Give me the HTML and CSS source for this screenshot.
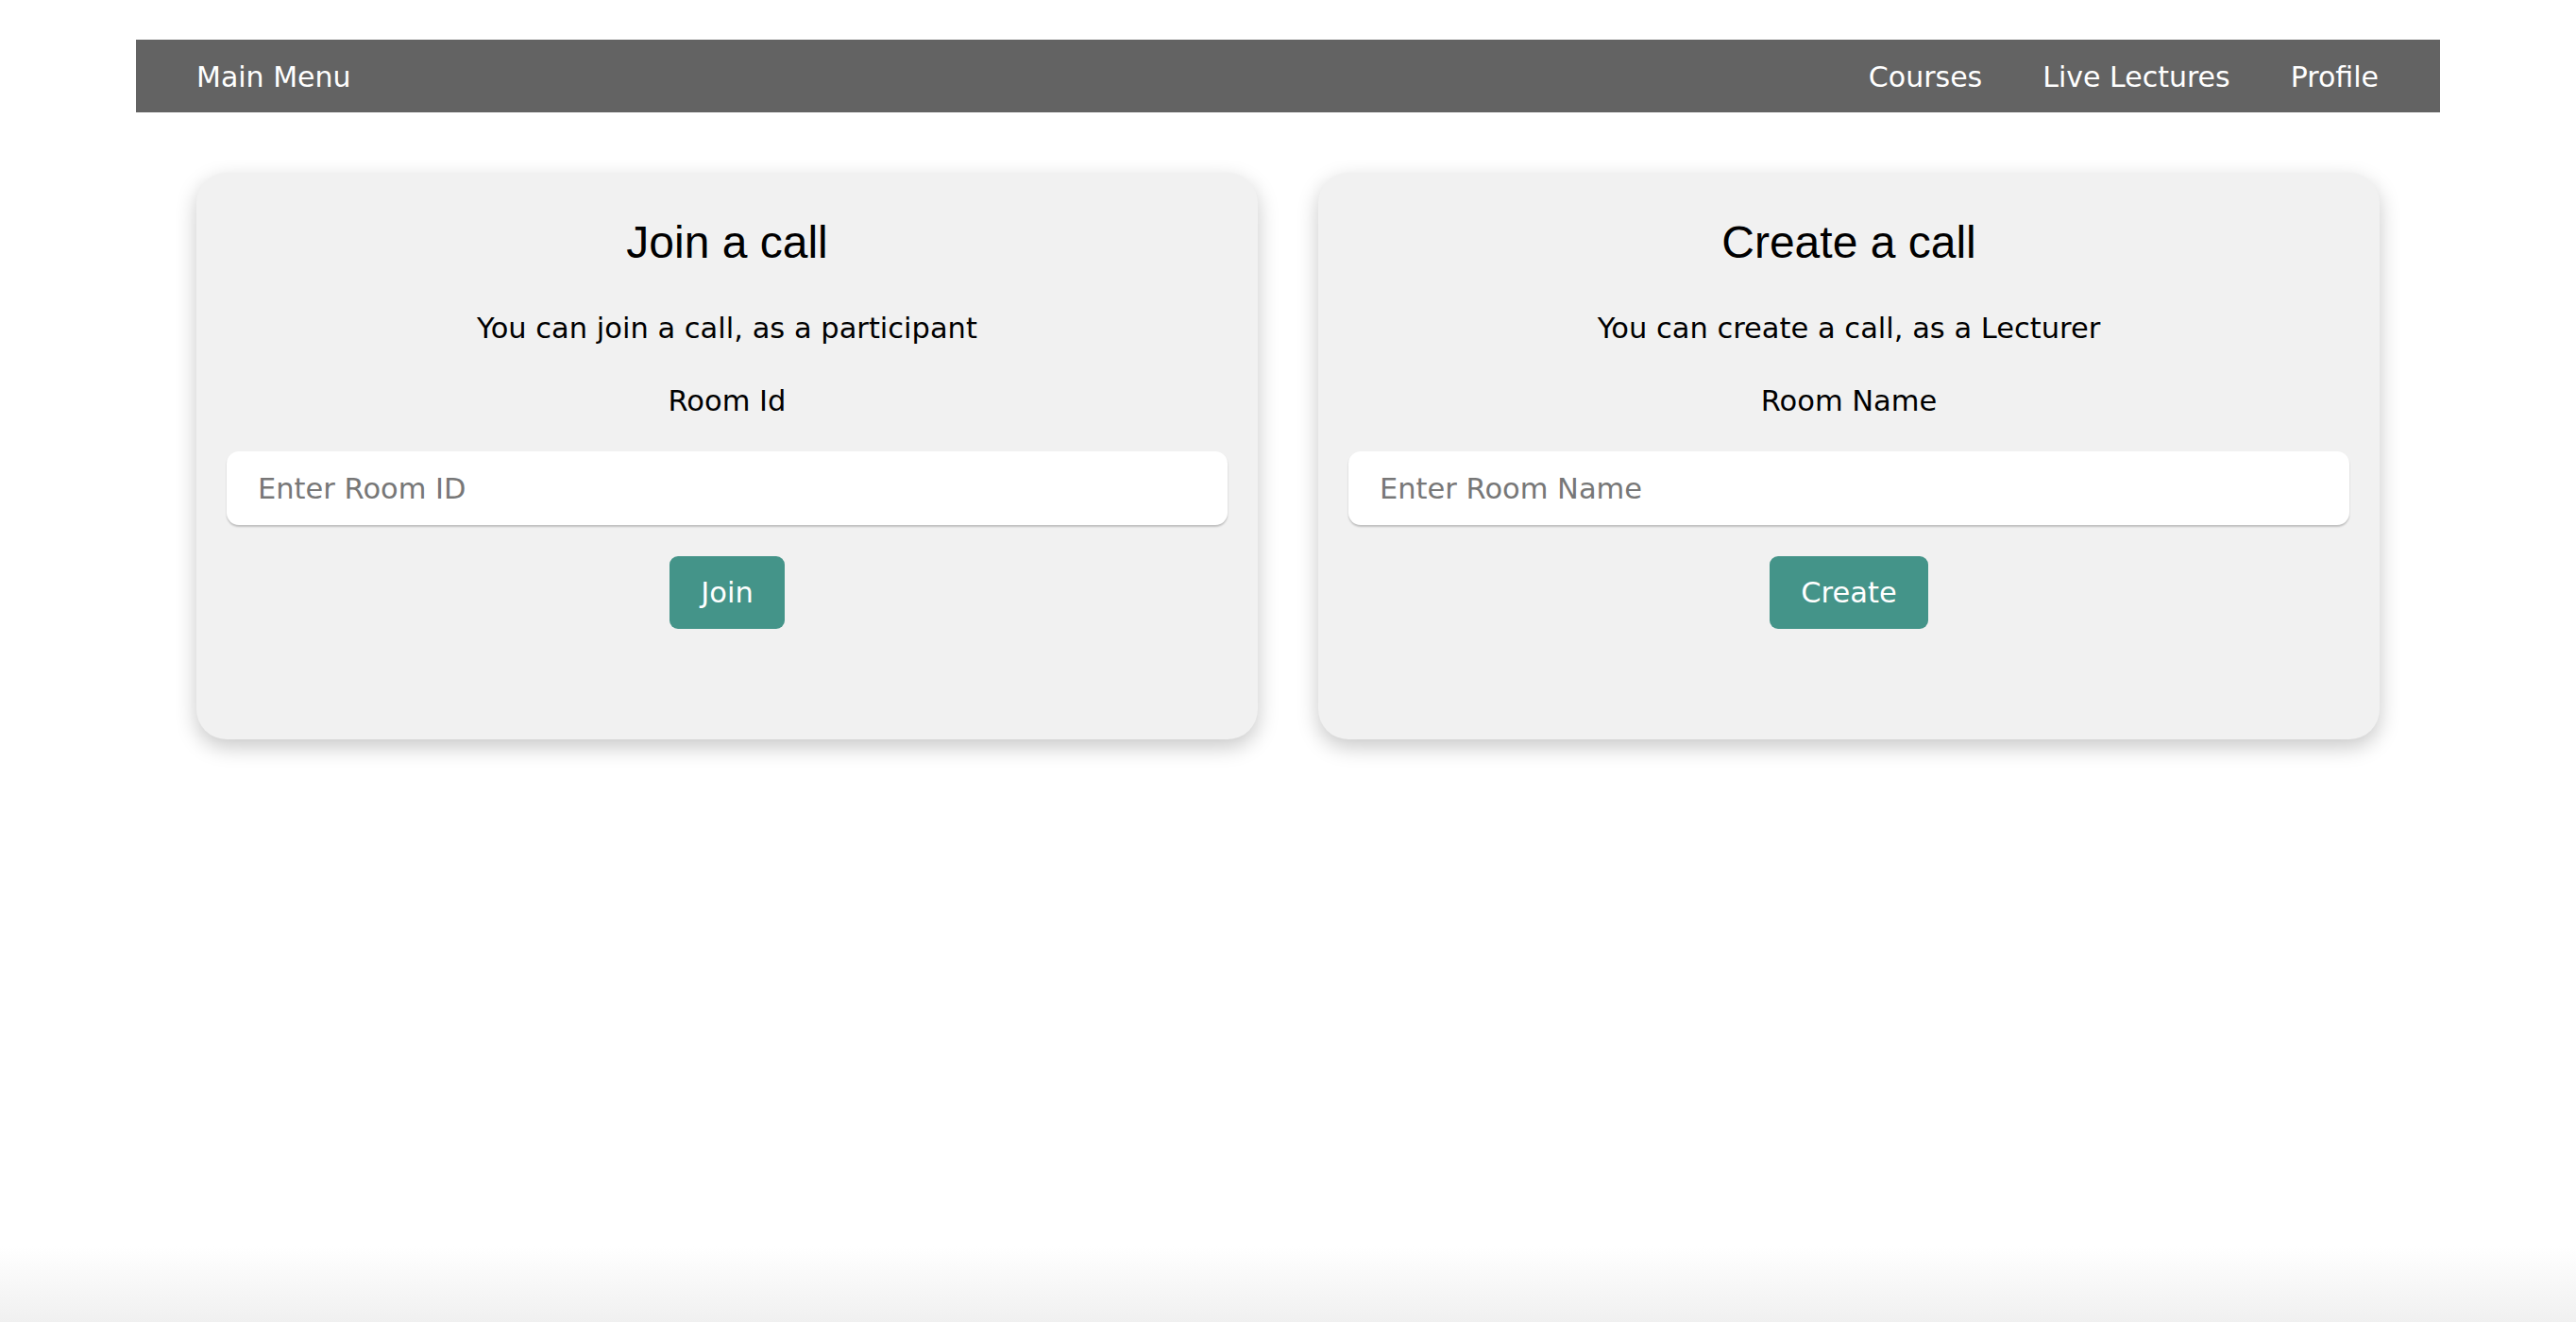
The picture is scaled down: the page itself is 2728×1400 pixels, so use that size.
FILE: index.html
```html
<!DOCTYPE html>
<html lang="en">
<head>
<meta charset="utf-8">
<title>Live Lectures</title>
<link rel="stylesheet" href="styles.css">
</head>
<body>
<div class="page">
  <nav class="navbar">
    <a class="nav-link" href="#">Main Menu</a>
    <div class="nav-right">
      <a class="nav-link" href="#">Courses</a>
      <a class="nav-link" href="#">Live Lectures</a>
      <a class="nav-link" href="#">Profile</a>
    </div>
  </nav>
  <main class="cards">
    <section class="card">
      <h2 class="card-title">Join a call</h2>
      <p class="card-text">You can join a call, as a participant</p>
      <label class="card-label" for="room-id">Room Id</label>
      <input class="card-input" id="room-id" type="text" placeholder="Enter Room ID">
      <button class="card-btn" type="button">Join</button>
    </section>
    <section class="card">
      <h2 class="card-title">Create a call</h2>
      <p class="card-text">You can create a call, as a Lecturer</p>
      <label class="card-label" for="room-name">Room Name</label>
      <input class="card-input" id="room-name" type="text" placeholder="Enter Room Name">
      <button class="card-btn" type="button">Create</button>
    </section>
  </main>
</div>
</body>
</html>
```
FILE: styles.css
```css
html, body {
  margin: 0;
  padding: 0;
}

body {
  min-height: 100vh;
  background: linear-gradient(to bottom, #ffffff 0, #ffffff calc(100% - 80px), #f0f0f0 100%);
  font-family: "DejaVu Sans", Verdana, sans-serif;
  font-size: 30.5px;
  color: #000;
}

.page {
  max-width: 2440px;
  margin: 0 auto;
  padding-top: 42px;
}

.navbar {
  display: flex;
  justify-content: space-between;
  align-items: center;
  background: #636363;
  height: 77px;
  box-sizing: border-box;
  padding: 2px 33px 0 32px;
}

.nav-right {
  display: flex;
}

.nav-link {
  color: #ffffff;
  text-decoration: none;
  font-size: 30px;
  line-height: 35px;
  padding: 0 32px;
}

.cards {
  display: grid;
  grid-template-columns: 1fr 1fr;
  gap: 64px;
  padding: 64px;
}

.card {
  display: flex;
  flex-direction: column;
  align-items: center;
  box-sizing: border-box;
  height: 600px;
  padding: 46px 32px 0;
  background: #f1f1f1;
  border-radius: 32px;
  box-shadow: 0 8px 22px rgba(0, 0, 0, 0.22);
}

.card-title {
  margin: 0 0 46px;
  font-family: "Liberation Sans", Arial, sans-serif;
  font-size: 48px;
  font-weight: normal;
  line-height: 55px;
}

.card-text {
  margin: 0 0 42px;
  line-height: 35px;
}

.card-label {
  display: block;
  margin: 0 0 36px;
  line-height: 35px;
}

.card-input {
  align-self: stretch;
  box-sizing: border-box;
  height: 78px;
  padding: 0 33px;
  border: none;
  border-radius: 13px;
  background: #ffffff;
  box-shadow: 0 2px 2px rgba(0, 0, 0, 0.2);
  font-family: "DejaVu Sans", Verdana, sans-serif;
  font-size: 30.5px;
  color: #000;
  outline: none;
}

.card-input::placeholder {
  color: #777777;
}

.card-btn {
  margin-top: 33px;
  height: 77px;
  padding: 0 33px;
  border: none;
  border-radius: 9px;
  background: #449489;
  color: #ffffff;
  font-family: "DejaVu Sans", Verdana, sans-serif;
  font-size: 30.5px;
  line-height: 35px;
  cursor: pointer;
}
```
